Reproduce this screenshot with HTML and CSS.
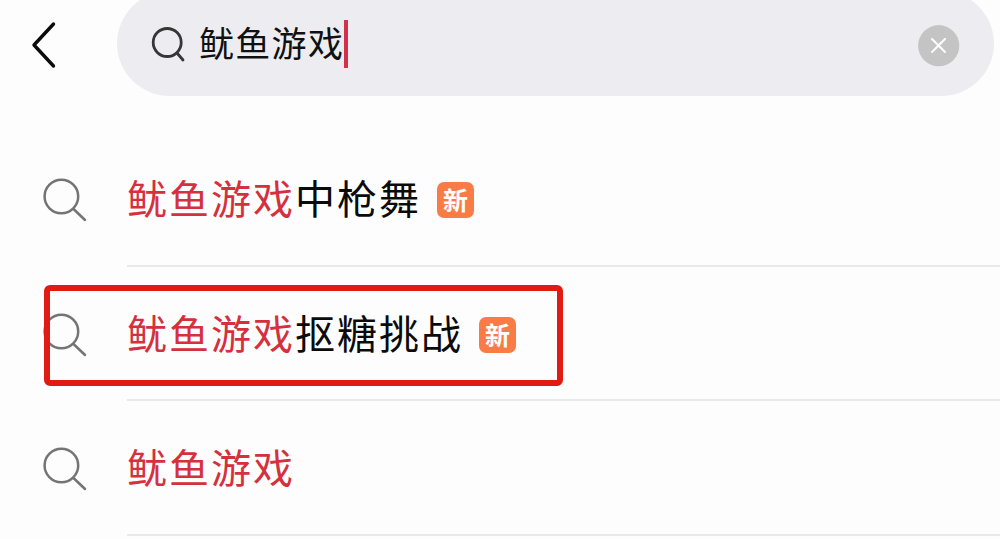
FILE: index.html
```
<!DOCTYPE html>
<html lang="zh-CN">
<head>
    <meta charset="UTF-8">
    <title>搜索</title>
    <link rel="stylesheet" href="styles.css">
</head>
<body>
<div class="header">
    <svg class="back" width="28" height="50" viewBox="0 0 28 50">
        <path d="M23.500 4 L4 25 L23.500 46"/>
    </svg>
    <div class="searchbox">
        <svg class="glass" width="36" height="38" viewBox="0 0 36 38">
            <circle cx="16.200" cy="16.500" r="14"/>
            <path d="M26 27 L32 34"/>
        </svg>
        <span class="keyword">鱿鱼游戏</span>
        <i class="cursor"></i>
        <svg class="clear" width="42" height="42" viewBox="0 0 42 42">
            <circle cx="20.700" cy="20.700" r="20.600"/>
            <path d="M14 14 L27 27 M27 14 L14 27"/>
        </svg>
    </div>
</div>
<ul class="list">
    <li>
        <svg class="icon" width="46" height="46" viewBox="0 0 46 46">
            <circle cx="19.400" cy="19.500" r="16.800"/>
            <path d="M31.500 32 L43 43"/>
        </svg>
        <div class="row">
            <span class="text"><em>鱿鱼游戏</em>中枪舞</span>
            <span class="new">新</span>
        </div>
    </li>
    <li>
        <svg class="icon" width="46" height="46" viewBox="0 0 46 46">
            <circle cx="19.400" cy="19.500" r="16.800"/>
            <path d="M31.500 32 L43 43"/>
        </svg>
        <div class="row">
            <span class="text"><em>鱿鱼游戏</em>抠糖挑战</span>
            <span class="new">新</span>
        </div>
        <div class="mark"></div>
    </li>
    <li>
        <svg class="icon" width="46" height="46" viewBox="0 0 46 46">
            <circle cx="19.400" cy="19.500" r="16.800"/>
            <path d="M31.500 32 L43 43"/>
        </svg>
        <div class="row">
            <span class="text"><em>鱿鱼游戏</em></span>
        </div>
    </li>
</ul>
</body>
</html>
```
FILE: styles.css
```
* {
    margin: 0;
    padding: 0;
    box-sizing: border-box;
    list-style: none;
}
html, body {
    width: 100%;
    height: 539px;
    overflow: hidden;
}
body {
    background-color: #fdfdfd;
    font-family: "Noto Sans CJK SC", sans-serif;
}
svg {
    flex: none;
    fill: none;
    stroke-linecap: round;
    stroke-linejoin: round;
}
.header {
    display: flex;
    align-items: flex-start;
    height: 132px;
    padding-left: 30px;
}
.back {
    margin-top: 20px;
    stroke: #0c0c0c;
    stroke-width: 3.4;
}
/* 搜索框顶部被裁掉一部分 */
.searchbox {
    display: flex;
    align-items: center;
    width: 877px;
    height: 105px;
    margin: -9px 0 0 59px;
    padding: 1px 34px 0 34px;
    border-radius: 53px;
    background-color: #ededf1;
}
.glass {
    margin-top: 2px;
    stroke: #363638;
    stroke-width: 2.8;
}
.keyword {
    margin: 0 0 5px 12px;
    font-size: 35px;
    line-height: 50px;
    letter-spacing: 1.3px;
    color: #111;
}
.cursor {
    width: 4px;
    height: 48px;
    margin-bottom: 1px;
    background-color: #d4304a;
}
.clear {
    margin-top: 3px;
    margin-left: auto;
}
.clear circle {
    fill: #c4c4c5;
}
.clear path {
    stroke: #fff;
    stroke-width: 2;
}
.list li {
    position: relative;
    display: flex;
    height: 134.5px;
    padding-left: 42px;
}
.icon {
    margin-top: 45px;
    stroke: #747474;
    stroke-width: 2.5;
}
.row {
    display: flex;
    flex: 1;
    align-items: center;
    margin-left: 39px;
    border-bottom: 2px solid #e9e9ec;
}
.text {
    margin-bottom: 2px;
    font-size: 40px;
    line-height: 60px;
    letter-spacing: 2px;
    color: #0b0b0b;
}
.text em {
    font-style: normal;
    color: #d5303e;
}
.new {
    width: 37px;
    height: 36px;
    margin: 4px 0 0 16px;
    border-radius: 7px;
    background-color: #f97c47;
    font-size: 25px;
    font-weight: bold;
    line-height: 35px;
    text-align: center;
    color: #fff;
}
/* 红框 */
.mark {
    position: absolute;
    left: 44px;
    top: 18px;
    width: 519px;
    height: 101px;
    border: 6px solid #e11b14;
    border-radius: 6px;
}
```
